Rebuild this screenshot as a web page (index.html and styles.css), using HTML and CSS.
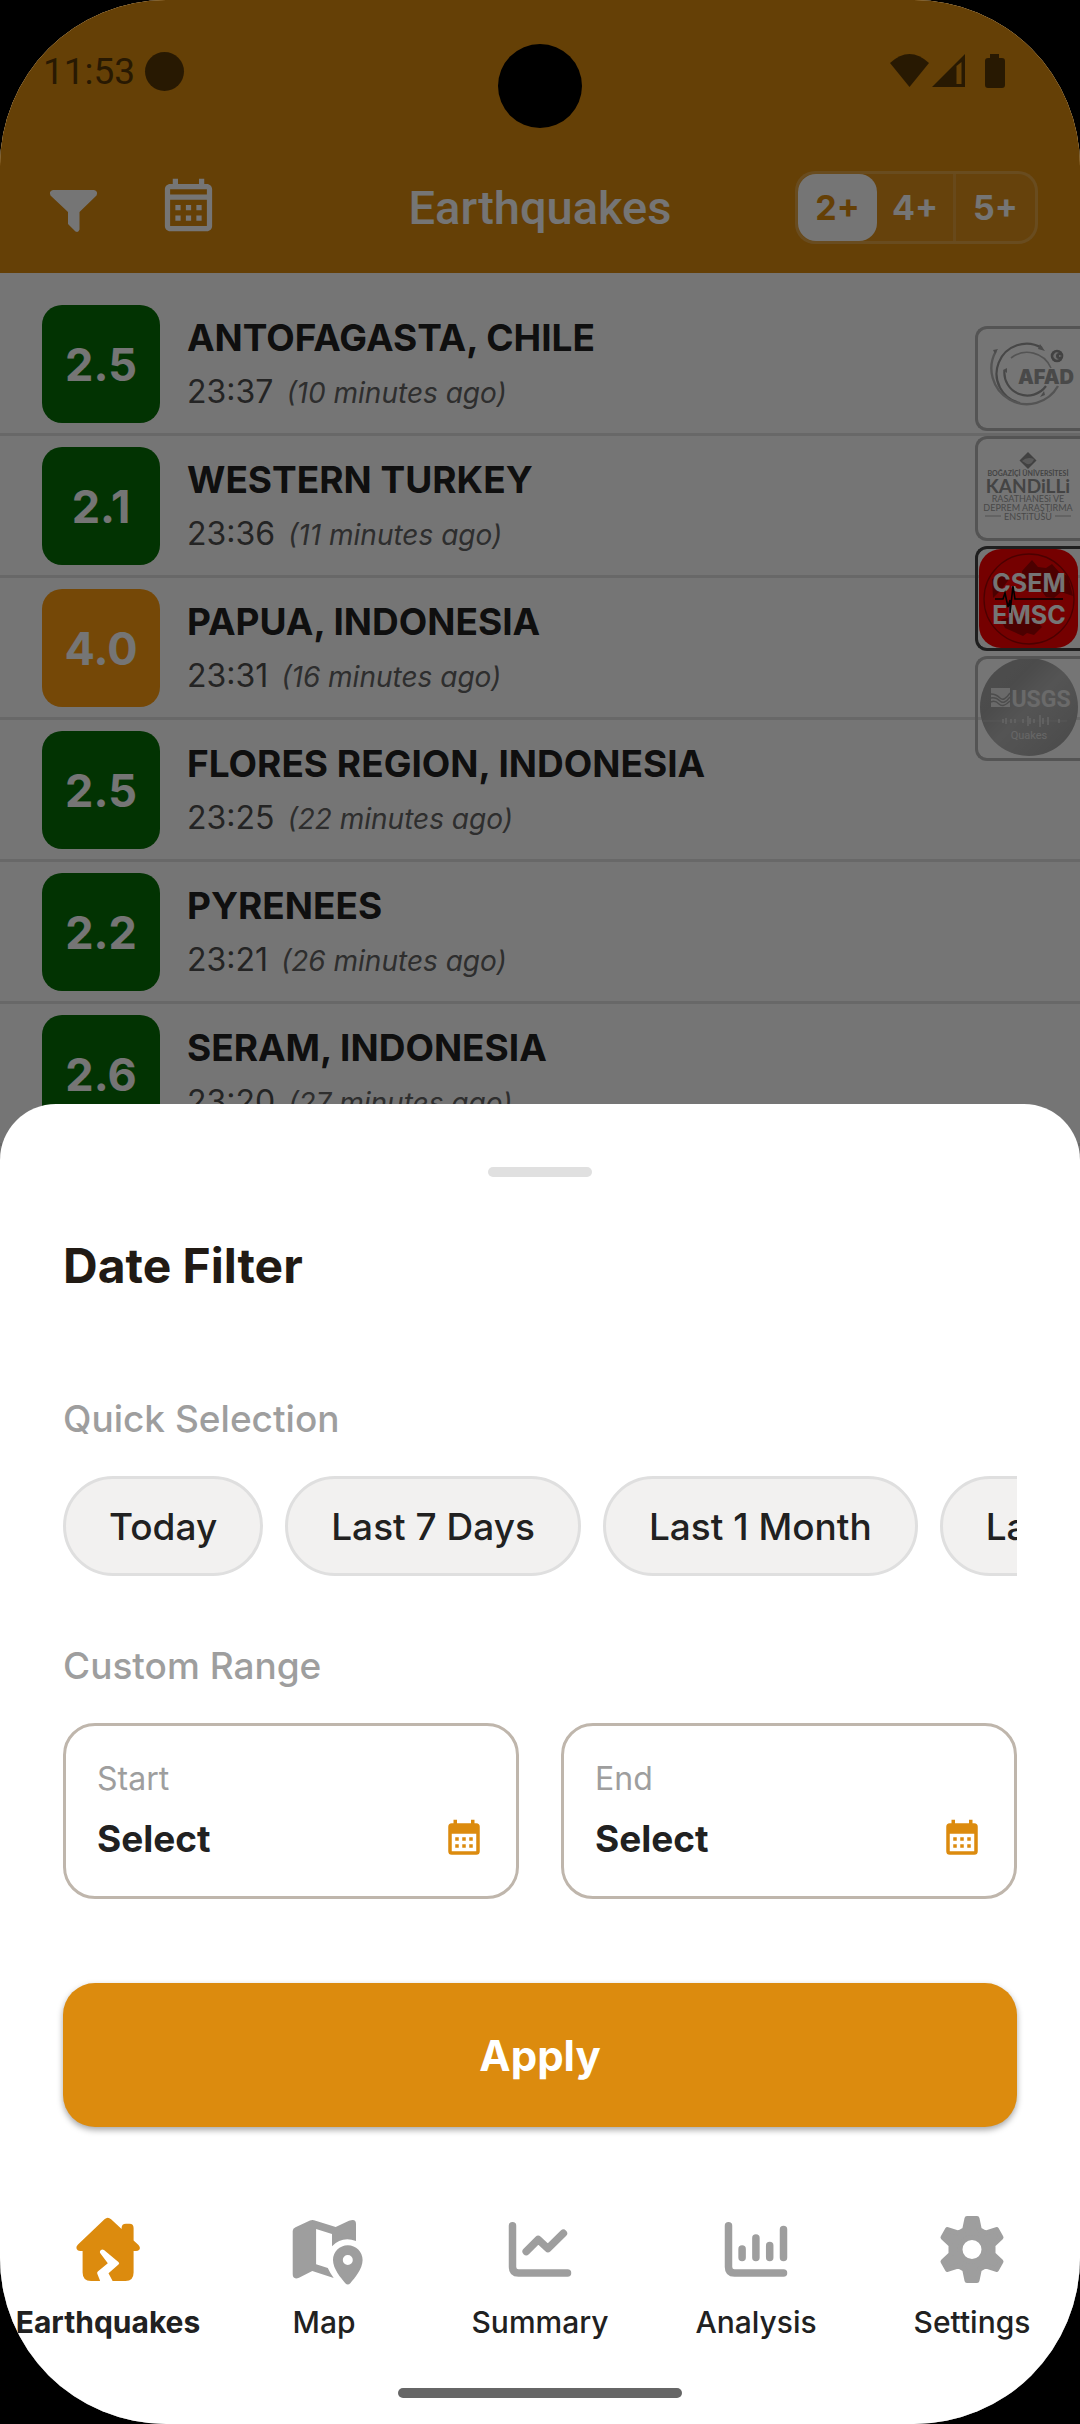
FILE: index.html
```html
<!DOCTYPE html>
<html lang="en">
<head>
  <meta charset="UTF-8" />
  <meta name="viewport" content="width=device-width, initial-scale=1.0"/>
  <title>Earthquakes</title>
  <link rel="stylesheet" href="styles.css">
</head>
<body>
  <div class="phone">
    <div class="app">
      <header class="header">
        <div class="status-bar">
          <span class="status-time">11:53</span>
          <span class="status-dot"></span>
          <span class="camera"></span>
          <svg class="status-icons" width="116" height="34" viewBox="0 0 116 34">
            <path d="M0 9Q19.500-9 39 9L19.500 33Z"/>
            <path fill-rule="evenodd" d="M42 33L75 0V33ZM66.500 12L71.500 8V30H66.500Z"/>
            <path d="M100 0h9v4h3q3 0 3 3v24q0 3-3 3H98q-3 0-3-3V7q0-3 3-3h2z"/>
          </svg>
        </div>

        <div class="toolbar">
          <div class="toolbar-actions">
            <button class="icon-btn" aria-label="Filter">
              <svg viewBox="42 176 63 63"><path d="M53 190H94Q98.500 191 96.500 195.500L79.500 212V229.500Q78.500 233 75.500 231.500L68 224V212L50.500 195.500Q48.500 191 53 190Z"/></svg>
            </button>
            <button class="icon-btn" aria-label="Date filter">
              <svg viewBox="0 0 24 24"><path d="M7 11h2v2H7v-2m14-6v14c0 1.110-.89 2-2 2H5c-1.110 0-2-.89-2-2V5c0-1.100.9-2 2-2h1V1h2v2h8V1h2v2h1c1.100 0 2 .9 2 2M5 7h14V5H5v2m14 12V9H5v10h14m-4-6v-2h2v2h-2m-4 0v-2h2v2h-2m-4 2h2v2H7v-2m8 2v-2h2v2h-2m-4 0v-2h2v2h-2z"/></svg>
            </button>
          </div>
          <h1 class="page-title">Earthquakes</h1>
          <div class="magnitude-switch">
            <button class="magnitude-btn active">2+</button>
            <button class="magnitude-btn divided">4+</button>
            <button class="magnitude-btn">5+</button>
          </div>
        </div>
      </header>

      <main class="content">
        <ul class="quake-list">
          <li class="quake">
            <span class="badge">2.5</span>
            <div class="quake-info">
              <h2 class="quake-place">ANTOFAGASTA, CHILE</h2>
              <p class="quake-time">23:37 <em>(10 minutes ago)</em></p>
            </div>
          </li>
          <li class="quake">
            <span class="badge">2.1</span>
            <div class="quake-info">
              <h2 class="quake-place">WESTERN TURKEY</h2>
              <p class="quake-time">23:36 <em>(11 minutes ago)</em></p>
            </div>
          </li>
          <li class="quake">
            <span class="badge medium">4.0</span>
            <div class="quake-info">
              <h2 class="quake-place">PAPUA, INDONESIA</h2>
              <p class="quake-time">23:31 <em>(16 minutes ago)</em></p>
            </div>
          </li>
          <li class="quake">
            <span class="badge">2.5</span>
            <div class="quake-info">
              <h2 class="quake-place">FLORES REGION, INDONESIA</h2>
              <p class="quake-time">23:25 <em>(22 minutes ago)</em></p>
            </div>
          </li>
          <li class="quake">
            <span class="badge">2.2</span>
            <div class="quake-info">
              <h2 class="quake-place">PYRENEES</h2>
              <p class="quake-time">23:21 <em>(26 minutes ago)</em></p>
            </div>
          </li>
          <li class="quake">
            <span class="badge">2.6</span>
            <div class="quake-info">
              <h2 class="quake-place">SERAM, INDONESIA</h2>
              <p class="quake-time">23:20 <em>(27 minutes ago)</em></p>
            </div>
          </li>
        </ul>

        <!-- Data sources, pinned to the right edge -->
        <div class="sources">
          <button class="source" aria-label="AFAD">
            <svg viewBox="3 3 102 99">
              <g fill="none">
                <path d="M67 22A30 30 0 1 0 45 77" stroke="#9c9c9c" stroke-width="2.200"/>
                <path d="M21 25A35 35 0 1 0 83 60" stroke="#b8b8b8" stroke-width="2.400"/>
                <path d="M36 32A26 26 0 0 1 76 42" stroke="#b8b8b8" stroke-width="1.600"/>
                <path d="M29.500 44A23 23 0 0 0 71 60" stroke="#9c9c9c" stroke-width="2.200"/>
              </g>
              <path d="M65 18l5 7-7-2zM18 24l5-1-3 5zM28 44l4-2v5zM65 71l5-2-1-4z" fill="#a4a4a4"/>
              <text class="logo-afad" x="71" y="58">AFAD</text>
              <circle cx="82" cy="30" r="6.300" fill="#909090"/>
              <path d="M84 27a3.600 3.600 0 1 0 0 6a3 3 0 1 1 0-6M84 29l3 1-3 1z" fill="#eee"/>
            </svg>
          </button>
          <button class="source" aria-label="Kandilli">
            <svg viewBox="3 3 102 99">
              <path d="M53 16l8.500 8.500-8.500 8.500-8.500-8.500z" fill="#909090"/>
              <path d="M47 25q5-5 12-2q-2 6-7 5z" fill="#c4c4c4"/>
              <g class="logo-kandilli">
                <text class="k-top" x="53" y="40">BOĞAZİÇİ ÜNİVERSİTESİ</text>
                <text class="k-name" x="53" y="57">KANDiLLi</text>
                <text class="k-mid" x="53" y="66">RASATHANESi VE</text>
                <text class="k-mid" x="53" y="75">DEPREM ARAŞTIRMA</text>
                <text class="k-mid" x="53" y="84">ENSTiTÜSÜ</text>
              </g>
              <path d="M10 80h16M80 80h16" stroke="#b0b0b0"/>
            </svg>
          </button>
          <button class="source selected" aria-label="CSEM EMSC">
            <svg viewBox="3 3 102 99">
              <rect x="4" y="3" width="99" height="99" rx="22" fill="#fe0000"/>
              <path d="M47 25l10-11 6 7 8 1 6-4 8 9 8 3 5 20-12-4-7 6-8-1-5-7-10 2-9-3zM17 33l14-6 4 5-9 12-8 8zM26 74l17-6 16 4 8 9-8 8-7-2-4 3-18-8z" fill="#a50000"/>
              <circle cx="54" cy="53" r="45" fill="none" stroke="#a50000" stroke-width="1.300"/>
              <g class="logo-csem">
                <text x="54" y="46">CSEM</text>
                <text x="54" y="78">EMSC</text>
              </g>
              <path d="M20 53h8l2-6 3 14 2-7 0 13 3-27 2 13h48" fill="none" stroke="#000" stroke-width="1.600"/>
            </svg>
          </button>
          <button class="source" aria-label="USGS Quakes">
            <svg viewBox="3 3 102 99">
              <defs>
                <linearGradient id="usgs" x1="0" y1="0" x2="1" y2="1">
                  <stop offset="0" stop-color="#a8a8a8"/>
                  <stop offset=".3" stop-color="#a4a4a4"/>
                  <stop offset=".5" stop-color="#b8b8b8"/>
                  <stop offset="1" stop-color="#a0a0a0"/>
                </linearGradient>
              </defs>
              <circle cx="54" cy="51" r="49" fill="url(#usgs)"/>
              <rect x="16" y="32" width="19" height="19" fill="#e6e6e6"/>
              <path d="M16 38q5 0 9 4t10-5M16 42q5-1 9 3t10-4M16 46q4-2 8 2t11-3" fill="none" stroke="#a8a8a8" stroke-width="1.400"/>
              <text class="logo-usgs" x="66" y="51">USGS</text>
              <path d="M8 65h84" stroke="#bebebe" stroke-width="1"/>
              <path d="M28 63v4M31 62v6M36 63v4M40 63v4M48 63v4M53 60v10M55 62v6M59 63v4M65 59v12M68 62v6M73 61v8M84 63v4" stroke="#dcdcdc" stroke-width="1.500"/>
              <text class="logo-quakes" x="54" y="83">Quakes</text>
            </svg>
          </button>
        </div>
      </main>
    </div>

    <div class="scrim"></div>

    <div class="bottom">
      <section class="sheet">
        <div class="handle"></div>
        <h2 class="sheet-title">Date Filter</h2>

        <h3 class="section-label">Quick Selection</h3>
        <div class="chips">
          <button class="chip">Today</button>
          <button class="chip">Last 7 Days</button>
          <button class="chip">Last 1 Month</button>
          <button class="chip">Last 3 Months</button>
        </div>

        <h3 class="section-label">Custom Range</h3>
        <div class="range">
          <button class="date-field">
            <span class="date-label">Start</span>
            <span class="date-value">Select
              <svg viewBox="0 0 24 24"><path d="M9 11v2H7v-2h2m4 0v2h-2v-2h2m4 0v2h-2v-2h2m2-8h-1V1h-2v2H8V1H6v2H5a2 2 0 0 0-2 2v14a2 2 0 0 0 2 2h14a2 2 0 0 0 2-2V5a2 2 0 0 0-2-2m0 16H5V9h14v10M9 15v2H7v-2h2m4 0v2h-2v-2h2m4 0v2h-2v-2h2z"/></svg>
            </span>
          </button>
          <button class="date-field">
            <span class="date-label">End</span>
            <span class="date-value">Select
              <svg viewBox="0 0 24 24"><path d="M9 11v2H7v-2h2m4 0v2h-2v-2h2m4 0v2h-2v-2h2m2-8h-1V1h-2v2H8V1H6v2H5a2 2 0 0 0-2 2v14a2 2 0 0 0 2 2h14a2 2 0 0 0 2-2V5a2 2 0 0 0-2-2m0 16H5V9h14v10M9 15v2H7v-2h2m4 0v2h-2v-2h2m4 0v2h-2v-2h2z"/></svg>
            </span>
          </button>
        </div>

        <button class="apply-btn">Apply</button>
      </section>

      <nav class="tabs">
        <a href="#earthquakes" class="tab active">
          <svg viewBox="-1 0 72 70"><path d="M31.500 5.200Q34.800 2.200 38.100 5.200L48.600 15V14Q48.600 9.700 53 9.700H56.500Q60.600 9.700 60.600 14V26.500L65.500 31Q68 34 66 36Q65 37 63 37H60.600V58.500Q60.600 67 52.500 67H39.600L35.500 59.300L45.500 50.600Q47 49.300 45.400 48L31 36Q28.500 34.500 27 37Q26.600 38.500 27.500 39.500L34.800 49.300L24.800 57.600Q23.800 58.600 24.300 59.800L27.200 67H18Q9.600 67 9.600 58.500V37H7.400Q4 37 3.400 34Q3.200 32 5 30.500Z"/></svg>
          Earthquakes
        </a>
        <a href="#map" class="tab">
          <svg viewBox="0 0 72 70"><path fill-rule="evenodd" d="M4.700 17Q4.700 14.500 7.500 13.300L22 6.600Q24 5.600 26 6.300L47.700 13L61 6.800Q68 4 68 10V27Q54 22 44 32.300V20L28.100 15V50.300L39.800 54Q42 59 45.700 64L24.300 57L11 63.800Q4.700 66 4.700 60ZM59.800 31.300c8.200 0 14.800 6.600 14.800 14.800c0 9-8 18-12.300 23.200q-2.500 2.500-5 0C53 64 45 55 45 46.100C45 38 51.600 31.300 59.800 31.300zM59.800 41a5 5 0 1 0 0 10a5 5 0 1 0 0-10z"/></svg>
          Map
        </a>
        <a href="#summary" class="tab">
          <svg class="line-icon" viewBox="0 0 72 70"><path d="M8.500 11.700V53Q8.500 59 14.500 59H63.500M22.200 37.500L34.200 25.500L43.900 34.500L59.400 19.300"/></svg>
          Summary
        </a>
        <a href="#analysis" class="tab">
          <svg class="line-icon" viewBox="0 0 72 70"><path d="M8.500 11.700V53Q8.500 59 14.500 59H63.500M22.100 35V43.500M35.900 24V43.500M49.700 31.500V43.500M63.500 15.500V43.500"/></svg>
          Analysis
        </a>
        <a href="#settings" class="tab">
          <svg class="gear-icon" viewBox="0 0 72 70"><path fill-rule="evenodd" d="M31 4.500H41L43.300 15.600L49.500 19.200L60.500 15.500L65 23.500L57 31V40L65 47.500L60.500 55.500L49.500 51.800L43.300 55.400L41 66.500H31L28.700 55.400L22.500 51.800L11.500 55.500L7 47.500L15 40V31L7 23.500L11.500 15.500L22.500 19.200L28.700 15.600ZM36 23.500a12 12 0 1 0 0 24a12 12 0 1 0 0-24z"/></svg>
          Settings
        </a>
      </nav>
      <div class="home-indicator"></div>
    </div>
  </div>
</body>
</html>
```
FILE: styles.css
```css
* {
  box-sizing: border-box;
  margin: 0;
  padding: 0;
}

body {
  font-family: 'Inter', sans-serif;
  background: #000;
  color: #212121;
}

button {
  font-family: inherit;
  border: none;
  background: none;
  color: inherit;
  cursor: pointer;
}

svg {
  display: block;
  fill: currentColor;
  overflow: visible;
}

/* The screen, the scrim and the bottom sheet share one grid cell */
.phone {
  display: grid;
  grid-template-columns: minmax(0, 1fr);
  min-height: 100vh;
  border-radius: 166px;
  overflow: hidden;
}

.app,
.scrim,
.bottom {
  grid-area: 1 / 1;
}

.app {
  background: #fff;
}

.scrim {
  background: rgba(0, 0, 0, 0.54);
  z-index: 1;
}

/* Header */
.header {
  background: #dc8b0e;
  color: #fff;
}

.status-bar {
  position: relative;
  display: flex;
  align-items: center;
  gap: 10px;
  height: 142px;
  padding: 0 74px 0 43px;
  font-family: 'Roboto', sans-serif;
  font-size: 37px;
  color: #583806;
}

.status-dot {
  width: 39px;
  height: 39px;
  border-radius: 50%;
  background: #583806;
}

.status-icons {
  margin-left: auto;
}

.camera {
  position: absolute;
  top: 44px;
  left: 50%;
  width: 84px;
  height: 84px;
  border-radius: 50%;
  background: #000;
  transform: translateX(-50%);
}

.toolbar {
  display: grid;
  grid-template-columns: 1fr auto 1fr;
  align-items: center;
  height: 131px;
  padding: 0 42px;
}

.toolbar-actions {
  display: flex;
  gap: 52px;
}

.icon-btn {
  width: 63px;
  height: 63px;
}

.page-title {
  font-family: 'Roboto', sans-serif;
  font-size: 47px;
  font-weight: 500;
}

.magnitude-switch {
  display: flex;
  justify-self: end;
  height: 73px;
  border: 3px solid rgba(255, 255, 255, 0.18);
  border-radius: 20px;
  background: rgba(255, 255, 255, 0.06);
}

.magnitude-btn {
  width: 79px;
  font-size: 34px;
  font-weight: 700;
}

.magnitude-btn.active {
  background: #fff;
  color: #dc8b0e;
  border-radius: 18px;
}

.magnitude-btn.divided {
  border-right: 3px solid rgba(255, 255, 255, 0.14);
}

/* Earthquake list */
.content {
  position: relative;
  padding-top: 21px;
}

.quake-list {
  list-style: none;
}

.quake {
  display: flex;
  align-items: center;
  gap: 27px;
  padding: 11px 42px 10px;
  border-bottom: 3px solid #e2e2e2;
}

.badge {
  display: flex;
  align-items: center;
  justify-content: center;
  width: 118px;
  height: 118px;
  border-radius: 20px;
  background: #067006;
  color: #fff;
  font-size: 45px;
  font-weight: 700;
}

.badge.medium {
  background: #ff9e11;
}

.quake-info {
  display: grid;
  gap: 12px;
}

.quake-place {
  font-size: 37px;
  line-height: 44px;
  font-weight: 700;
}

.quake-time {
  font-size: 32px;
  line-height: 40px;
  color: #4f4f4f;
}

.quake-time em {
  margin-left: 4px;
  font-size: 28px;
  color: #646464;
}

.sources {
  position: absolute;
  top: 53px;
  right: 0;
  display: grid;
  gap: 5px;
}

.source {
  width: 105px;
  height: 105px;
  border: 3px solid #b8b8b8;
  border-right: none;
  border-radius: 12px 0 0 12px;
  overflow: hidden;
}

.source.selected {
  border-color: #444;
}

.source text {
  text-anchor: middle;
}

.logo-afad {
  font-size: 20px;
  font-weight: 900;
  fill: #a0a0a0;
}

.logo-kandilli {
  font-family: 'Lato', sans-serif;
  fill: #949494;
}

.k-top {
  font-size: 7px;
  font-weight: 700;
}

.k-name {
  font-size: 19px;
  font-weight: 700;
}

.k-mid {
  font-size: 9px;
  fill: #a0a0a0;
}

.logo-csem {
  font-size: 25px;
  font-weight: 700;
  fill: #fff;
}

.logo-usgs {
  font-family: 'Roboto', sans-serif;
  font-size: 23px;
  font-weight: 700;
  fill: #e6e6e6;
}

.logo-quakes {
  font-family: 'Roboto', sans-serif;
  font-size: 11px;
  fill: #e0e0e0;
}

/* Bottom sheet */
.bottom {
  align-self: end;
  z-index: 2;
  padding-bottom: 26px;
  border-radius: 56px 56px 0 0;
  background: #fff;
}

.sheet {
  padding: 63px 63px 0;
}

.handle {
  width: 104px;
  height: 10px;
  margin: 0 auto 59px;
  border-radius: 5px;
  background: #e0e0e0;
}

.sheet-title {
  margin-bottom: 101px;
  font-size: 48px;
  line-height: 60px;
  font-weight: 700;
  color: #211a14;
}

.section-label {
  margin-bottom: 35px;
  font-size: 37px;
  line-height: 44px;
  font-weight: 500;
  color: #9e9e9e;
}

.chips {
  display: flex;
  gap: 22px;
  margin-bottom: 68px;
  overflow: hidden;
}

.chip {
  flex: none;
  height: 100px;
  padding: 0 43px;
  border: 3px solid #dfdfdf;
  border-radius: 50px;
  background: #f2f1f0;
  font-size: 37px;
  font-weight: 500;
}

.range {
  display: grid;
  grid-template-columns: 1fr 1fr;
  gap: 42px;
  margin-bottom: 84px;
}

.date-field {
  display: grid;
  gap: 18px;
  padding: 33px 31px 35px;
  border: 3px solid #bfb6ac;
  border-radius: 32px;
  text-align: left;
}

.date-label {
  font-size: 32px;
  line-height: 40px;
  color: #9e9e9e;
}

.date-value {
  display: flex;
  justify-content: space-between;
  align-items: center;
  font-size: 37px;
  line-height: 44px;
  font-weight: 700;
}

.date-value svg {
  width: 42px;
  height: 42px;
  color: #dc8b0e;
}

.apply-btn {
  width: 100%;
  height: 144px;
  border-radius: 32px;
  background: #dc8b0e;
  box-shadow: 0 3px 6px rgba(0, 0, 0, 0.35);
  color: #fff;
  font-size: 42px;
  font-weight: 700;
}

/* Bottom navigation */
.tabs {
  display: grid;
  grid-template-columns: repeat(5, 1fr);
  padding: 87px 0 48px;
}

.tab {
  display: grid;
  justify-items: center;
  gap: 20px;
  font-size: 30px;
  line-height: 36px;
  font-weight: 500;
  color: #212121;
  text-decoration: none;
}

.tab svg {
  width: 72px;
  height: 70px;
  color: #9e9e9e;
}

.tab.active {
  font-weight: 700;
}

.tab.active svg {
  color: #dc8b0e;
}

.line-icon {
  fill: none;
  stroke: currentColor;
  stroke-width: 7.500;
  stroke-linecap: round;
  stroke-linejoin: round;
}

.gear-icon {
  stroke: currentColor;
  stroke-width: 5;
  stroke-linejoin: round;
}

.home-indicator {
  width: 284px;
  height: 10px;
  margin: 0 auto;
  border-radius: 5px;
  background: #666;
}
```
